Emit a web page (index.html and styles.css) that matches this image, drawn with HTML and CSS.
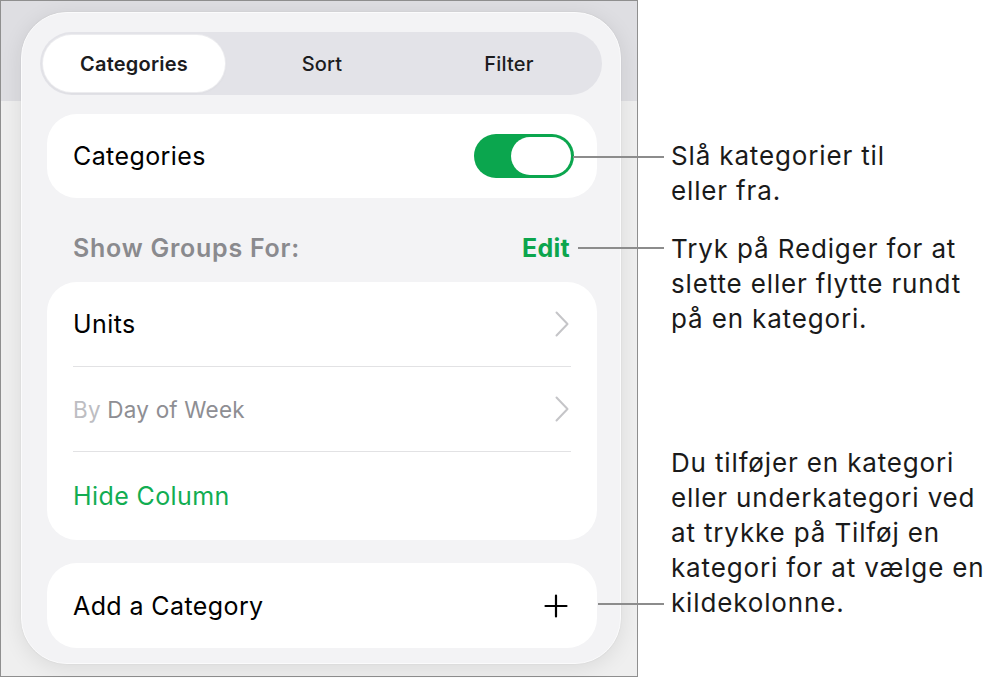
FILE: index.html
```html
<!DOCTYPE html>
<html lang="da">
<head>
<meta charset="utf-8">
<title>Categories</title>
<link rel="stylesheet" href="styles.css">
</head>
<body>
<div class="page">
  <div class="frame">
    <div class="panel">
      <div class="seg">
        <div class="seg-item active">Categories</div>
        <div class="seg-item">Sort</div>
        <div class="seg-item">Filter</div>
      </div>

      <div class="card card-toggle">
        <span class="label">Categories</span>
        <div class="toggle"><div class="knob"></div></div>
      </div>

      <div class="section-head">
        <span class="section-title">Show Groups For:</span>
        <span class="edit">Edit</span>
      </div>

      <div class="card group">
        <div class="row">
          <span class="label">Units</span>
          <svg class="chev" width="14" height="26" viewBox="0 0 14 26"><path d="M1.5 1.5 L12.5 13 L1.5 24.5" fill="none" stroke="#c5c5c8" stroke-width="2" stroke-linecap="round" stroke-linejoin="round"/></svg>
        </div>
        <div class="divider"></div>
        <div class="row">
          <span class="label small muted"><span class="by">By</span> Day of Week</span>
          <svg class="chev" width="14" height="26" viewBox="0 0 14 26"><path d="M1.5 1.5 L12.5 13 L1.5 24.5" fill="none" stroke="#c5c5c8" stroke-width="2" stroke-linecap="round" stroke-linejoin="round"/></svg>
        </div>
        <div class="divider"></div>
        <div class="row row-last">
          <span class="label green">Hide Column</span>
        </div>
      </div>

      <div class="card card-add">
        <span class="label">Add a Category</span>
        <svg class="plus" width="24" height="24" viewBox="0 0 24 24"><path d="M12 1.5 V22.5 M1.5 12 H22.5" fill="none" stroke="#000" stroke-width="2.2" stroke-linecap="round"/></svg>
      </div>
    </div>
  </div>

  <div class="notes">
    <div class="note note-1">
      <span class="leader"></span>
      <p>Slå kategorier til<br>eller fra.</p>
    </div>
    <div class="note note-2">
      <span class="leader"></span>
      <p>Tryk på Rediger for at<br>slette eller flytte rundt<br>på en kategori.</p>
    </div>
    <div class="note note-3">
      <span class="leader"></span>
      <p>Du tilføjer en kategori<br>eller underkategori ved<br>at trykke på Tilføj en<br>kategori for at vælge en<br>kildekolonne.</p>
    </div>
  </div>
</div>
</body>
</html>
```

FILE: styles.css
```css
* { box-sizing: border-box; }

html, body {
  margin: 0;
  padding: 0;
  background: #ffffff;
}

body {
  font-family: Inter, "Noto Sans", "DejaVu Sans", sans-serif;
  color: #000;
  width: 999px;
  height: 678px;
  overflow: hidden;
}

.page {
  display: flex;
  align-items: flex-start;
}

/* screenshot frame */
.frame {
  width: 638px;
  height: 677px;
  flex: none;
  border: 1px solid #8f8f8f;
  background: linear-gradient(to bottom, #dedee2 0, #dedee2 100px, #efefef 100px, #efefef 100%);
  padding: 11px 0 0 20px;
}

.panel {
  width: 600px;
  height: 652px;
  border-radius: 46px;
  background: #f3f3f5;
  border: 1px solid #fbfbfc;
  box-shadow: 0 4px 22px rgba(0, 0, 0, 0.09), 0 0 0 1px rgba(0, 0, 0, 0.02);
  padding: 19px 18px 0 18px;
  display: flex;
  flex-direction: column;
}

/* segmented control */
.seg {
  height: 63px;
  border-radius: 32px;
  background: #e3e3e8;
  padding: 3px;
  display: flex;
}

.seg-item {
  flex: 1;
  display: flex;
  align-items: center;
  justify-content: center;
  font-size: 20px;
  font-weight: 500;
  color: #1c1c1e;
  letter-spacing: 0.2px;
  padding-left: 7px;
}

.seg-item.active {
  flex: none;
  width: 182px;
  padding-left: 0;
  background: #fff;
  border-radius: 29px;
  font-weight: 600;
  box-shadow: 0 0 0 1px #ececef, 0 1px 3px rgba(0, 0, 0, 0.06);
}

/* cards */
.card {
  margin: 0 5px 0 7px;
  background: #fff;
  border-radius: 30px;
}

.label {
  font-size: 25px;
  letter-spacing: 0.4px;
  color: #000;
}

.label.small {
  font-size: 22.5px;
  letter-spacing: 0.2px;
}

.card-toggle {
  margin-top: 19px;
  height: 84px;
  display: flex;
  align-items: center;
  justify-content: space-between;
  padding: 0 23px 0 26px;
}

.toggle {
  width: 100px;
  height: 44px;
  border-radius: 22px;
  background: #0ba64e;
  padding: 3px;
  display: flex;
  justify-content: flex-end;
}

.knob {
  width: 60px;
  height: 38px;
  border-radius: 19px;
  background: #fff;
}

.section-head {
  height: 84px;
  display: flex;
  justify-content: space-between;
  align-items: flex-start;
  padding: 35px 32px 0 33px;
}

.section-title {
  font-size: 25px;
  font-weight: 600;
  color: #8a8a8e;
  letter-spacing: 0.75px;
  line-height: 30px;
}

.edit {
  font-size: 25px;
  font-weight: 700;
  color: #0ca54d;
  line-height: 30px;
  letter-spacing: 0.3px;
}

.group {
  display: flex;
  flex-direction: column;
}

.row {
  height: 84px;
  display: flex;
  align-items: center;
  justify-content: space-between;
  padding: 0 28px 0 26px;
}

.row-last { height: 88px; }

.divider {
  height: 1px;
  background: #e2e2e4;
  margin: 0 26px 0 26px;
}

.muted { color: #8e8e93; }
.by { color: #bdbdc2; }
.green { color: #12ad52; }

.card-add {
  margin-top: 23px;
  height: 85px;
  display: flex;
  align-items: center;
  justify-content: space-between;
  padding: 0 29px 0 26px;
}

/* callouts */
.notes {
  margin-left: 33px;
  padding-top: 138px;
  display: flex;
  flex-direction: column;
}

.note {
  position: relative;
}

.note p {
  margin: 0;
  font-size: 26px;
  line-height: 35px;
  color: #1a1a1a;
  letter-spacing: 0.85px;
  white-space: nowrap;
}

.note-2 { margin-top: 23px; }
.note-3 { margin-top: 109px; }

.leader {
  position: absolute;
  height: 2px;
  background: #8c8c8c;
}

.note-1 .leader { left: -98px; width: 91px; top: 18px; }
.note-2 .leader { left: -93px; width: 86px; top: 16px; }
.note-3 .leader { left: -73px; width: 66px; top: 158px; }
```
